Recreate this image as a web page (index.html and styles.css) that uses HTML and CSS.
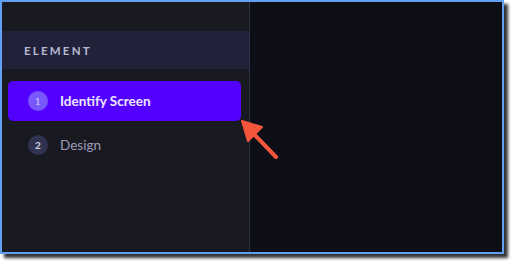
FILE: index.html
```html
<!DOCTYPE html>
<html>
<head>
<meta charset="utf-8">
<link rel="stylesheet" href="styles.css">
</head>
<body>
<div class="frame">
  <aside class="sidebar">
    <div class="section-head">ELEMENT</div>
    <ul class="steps">
      <li class="step active"><span class="num serif">1</span><span class="label">Identify Screen</span></li>
      <li class="step"><span class="num">2</span><span class="label">Design</span></li>
    </ul>
  </aside>
  <main class="content"></main>
  <svg class="arrow" width="60" height="60" viewBox="0 0 60 60">
    <line x1="36" y1="37" x2="8" y2="8" stroke="#f4563c" stroke-width="4" stroke-linecap="round"/>
    <polygon points="2,1 22,7 8,21" fill="#f4563c" stroke="#f4563c" stroke-width="2" stroke-linejoin="round"/>
  </svg>
</div>
</body>
</html>
```
FILE: styles.css
```css
* { box-sizing: border-box; margin: 0; padding: 0; }
html, body { background: #ffffff; }
body { margin: 0; width: 514px; height: 264px; overflow: hidden; font-family: Lato, "Noto Sans", sans-serif; }
.frame {
  position: relative;
  width: 504px;
  height: 254px;
  border: 2px solid #62a0f2;
  background: #0e0e17;
  display: flex;
  box-shadow: 4px 4px 3px rgba(0,0,0,0.8);
}
.sidebar {
  width: 248px;
  background: #191922;
  border-right: 1px solid #2e3044;
  padding-top: 29px;
}
.section-head {
  height: 38px;
  background: #21223a;
  display: flex;
  align-items: center;
  padding-left: 22px;
  font-size: 11.5px;
  font-weight: 700;
  letter-spacing: 2.2px;
  color: #b9b9d6;
}
.steps { list-style: none; padding: 12px 8px 0 6px; }
.step {
  height: 40px;
  display: flex;
  align-items: center;
  padding-left: 20px;
  border-radius: 5px;
  margin-bottom: 4px;
  gap: 12px;
}
.step.active { background: #5400fe; }
.num {
  width: 20px; height: 20px;
  border-radius: 50%;
  background: #313150;
  color: #d0d0e6;
  font-size: 10px;
  font-weight: 700;
  display: flex; align-items: center; justify-content: center;
}
.active .num { background: #7858fb; color: #dcd6ff; font-weight: 400; }
.serif { font-family: "DejaVu Serif", serif; font-size: 10px; }
.label { font-size: 13.5px; color: #9e9cba; }
.active .label { color: #ece8ff; font-weight: 700; }
.content { flex: 1; }
.arrow { position: absolute; left: 238px; top: 118px; }
```
